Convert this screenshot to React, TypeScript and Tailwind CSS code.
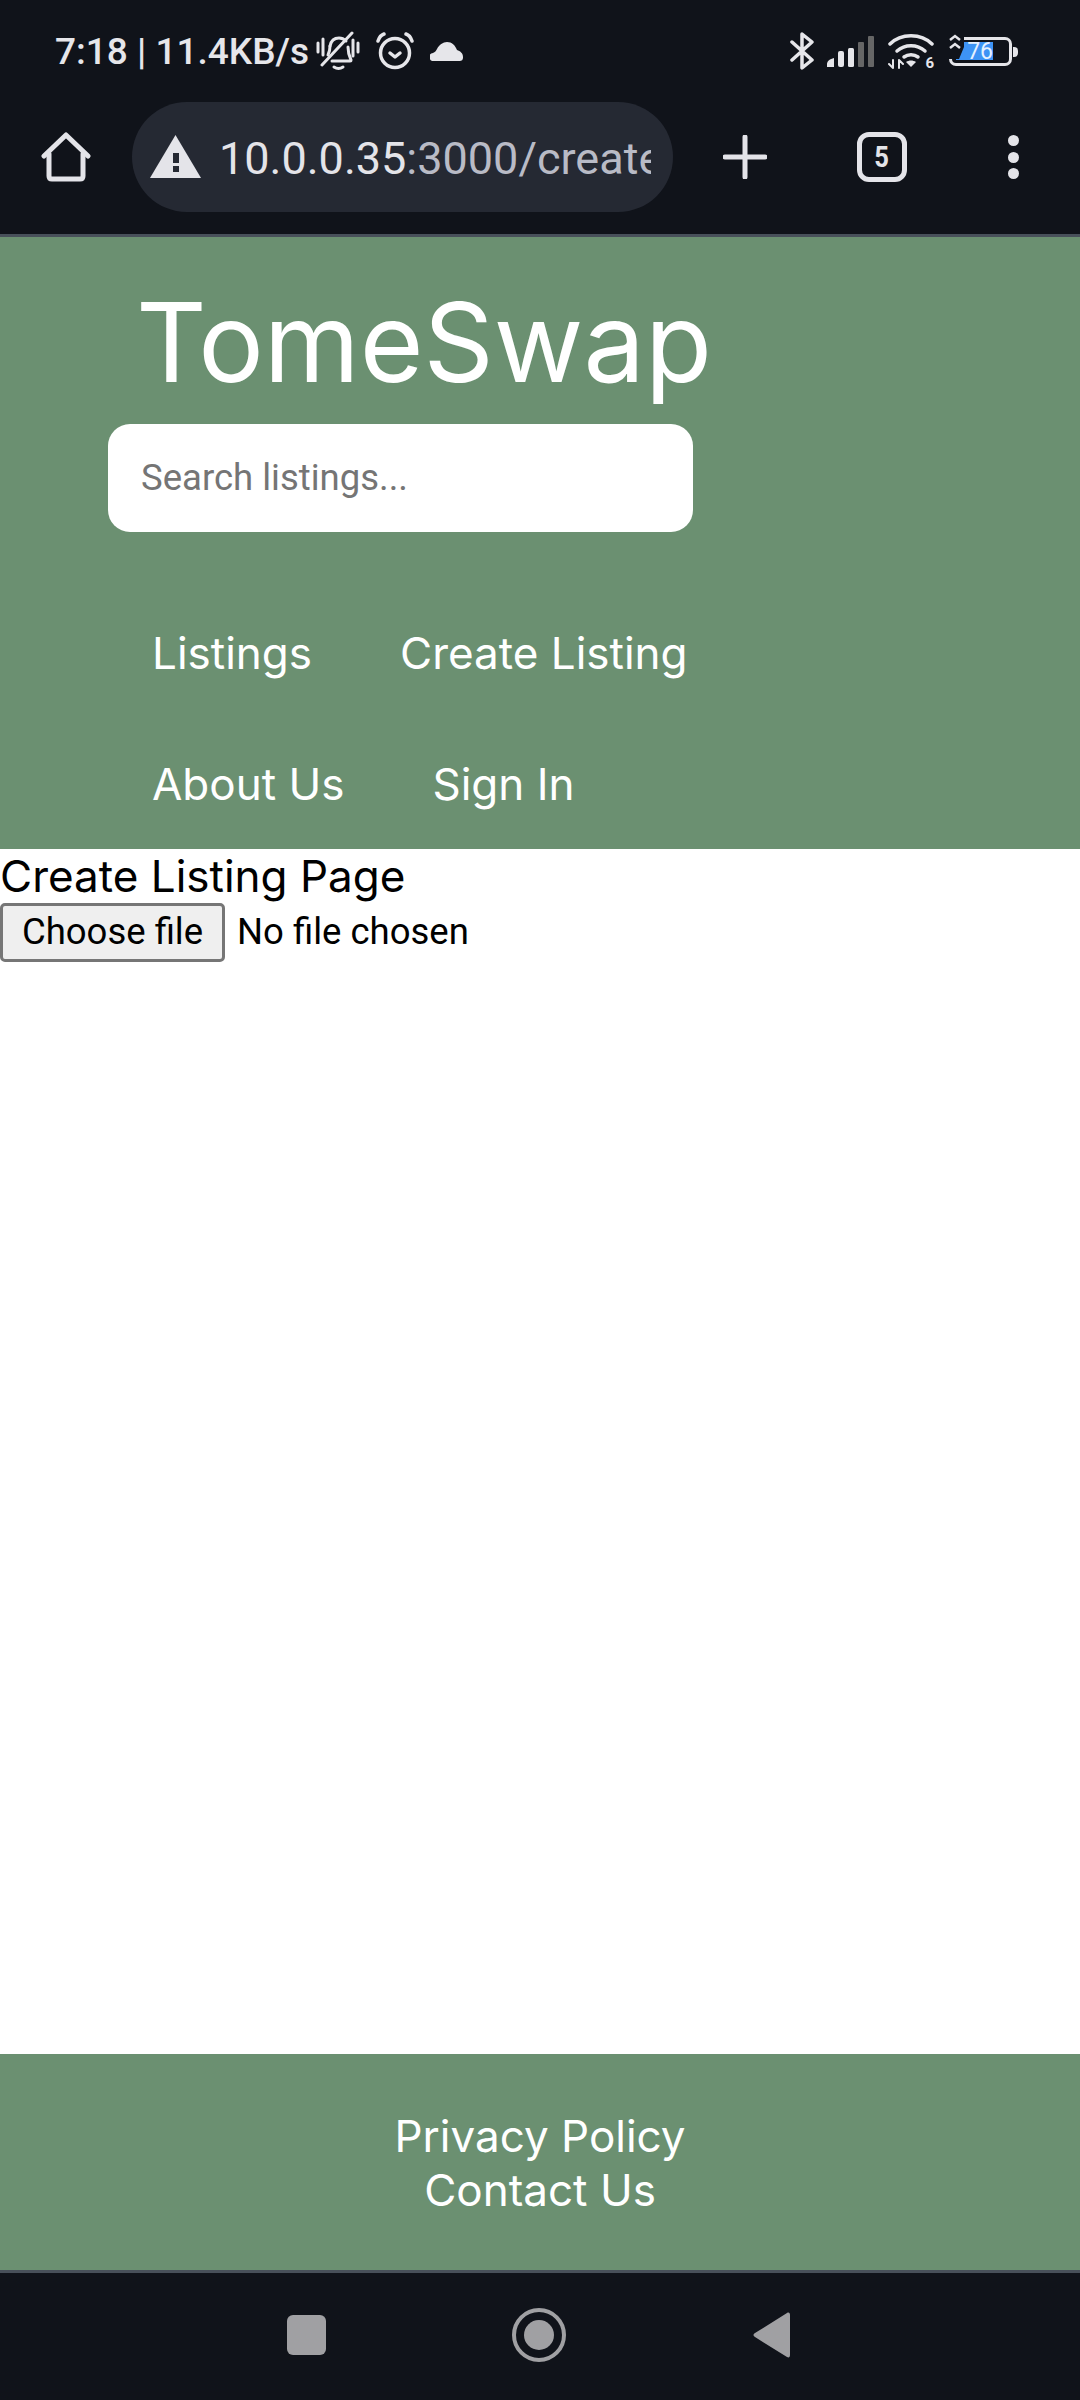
import React from 'react';

const NavLink: React.FC<{ label: string }> = ({ label }) => (
  <a className="block text-[44px] leading-[54px] text-white">{label}</a>
);

const StatusBar: React.FC = () => (
  <div className="flex h-[102px] items-center justify-between pl-[55px] pr-[68px] text-[#e6e6ea]">
    <div className="flex items-center">
      <span className="font-['Roboto',sans-serif] text-[37px] leading-none font-medium">7:18 | 11.4KB/s</span>
      {/* muted bell */}
      <svg className="ml-[7px]" width="44" height="40" viewBox="0 0 44 40" fill="none" stroke="currentColor" strokeWidth="3" strokeLinecap="round" strokeLinejoin="round">
        <path d="M14 15c1-5 4-8 9-8 3 0 5 1 7 3" />
        <path d="M32 16c0 5 1 9 3 13 0 1 0 1-1 1H16" />
        <path d="M12 24c1-2 2-5 2-9" />
        <path d="M18 36c3 2 6 2 9 0" />
        <path d="M6 34 36 2" />
        <path d="M2 12v9M7 8v16M37 9v16M42 12v9" />
      </svg>
      {/* alarm */}
      <svg className="ml-[16px]" width="38" height="38" viewBox="0 0 38 38" fill="none" stroke="currentColor" strokeWidth="3.5" strokeLinecap="round" strokeLinejoin="round">
        <circle cx="19" cy="21" r="14.5" />
        <path d="M14 21l5 4 5-4" />
        <path d="M2 9c1-3 3-6 6-7M36 9c-1-3-3-6-6-7" />
      </svg>
      <svg className="ml-[16px]" width="33" height="19" viewBox="0 0 33 19" fill="currentColor">
        <path d="M4 19a4 4 0 0 1-1-8c2-1 3-2 4-4 2-4 6-7 10-7 5 0 8 3 10 8 3 1 6 3 6 7 0 3-1 4-4 4Z" />
      </svg>
    </div>
    <div className="flex items-center">
      {/* bluetooth */}
      <svg width="24" height="38" viewBox="0 0 24 38" fill="none" stroke="currentColor" strokeWidth="3.5" strokeLinejoin="round" strokeLinecap="round">
        <path d="M2 10l20 18-10 8V2l10 8L2 28" />
      </svg>
      {/* signal */}
      <svg className="ml-[13px]" width="48" height="31" viewBox="0 0 48 31" fill="currentColor">
        <path d="M0 31v-3c0-3 3-5 7-6v9Z" />
        <rect x="11" y="15" width="6" height="16" rx="2" />
        <rect x="21" y="12" width="6" height="19" rx="1.5" />
        <rect x="31" y="6" width="6" height="25" rx="1" fill="#666" />
        <rect x="41" y="0" width="6" height="31" rx="1" fill="#666" />
      </svg>
      {/* wifi */}
      <div className="relative ml-[13px] h-[36px] w-[46px]">
        <svg width="46" height="36" viewBox="0 0 46 36" fill="none" stroke="currentColor" strokeWidth="3.5" strokeLinecap="round">
          <path d="M2 11C13 0 33 0 44 11" />
          <path d="M9 18c8-7 20-7 28 0" />
          <path d="M16 24c4-3 10-3 14 0" />
          <path d="M18 29c3-2 7-2 10 0l-5 5Z" fill="currentColor" stroke="none" />
          <path d="M5 35v-8M1 31l4 4M11 27v8M11 27l4 4" strokeWidth="2" />
        </svg>
        <span className="absolute -bottom-[2px] right-0 font-['Roboto',sans-serif] text-[15px] leading-none font-bold">6</span>
      </div>
      {/* battery */}
      <div className="relative ml-[15px] flex h-[29px] w-[63px] items-center rounded-[7px] border-[3px] border-[#e6e6ea] pl-[4px]">
        <div className="flex h-[18px] w-[37px] items-center justify-end bg-[#3d93f5] font-['Roboto',sans-serif] text-[23px] leading-none text-[#e6f1ff]">76</div>
        <div className="absolute -right-[9px] top-[7px] h-[10px] w-[5px] rounded-r-sm bg-[#e6e6ea]" />
        <svg className="absolute -left-[5px] -top-[7px]" width="17" height="26" viewBox="0 0 17 26" fill="none">
          <path d="M0 0h17v14l-5 12H0Z" fill="#10131a" />
          <path d="M3 7l5-4 5 4M3 15l5-4 5 4" stroke="#e6e6ea" strokeWidth="2.5" />
        </svg>
      </div>
    </div>
  </div>
);

const Toolbar: React.FC = () => (
  <div className="flex h-[132px] items-start pl-[41px] text-[#e4e4e9]">
    <svg className="mt-[30px]" width="50" height="50" viewBox="0 0 50 50" fill="none" stroke="currentColor" strokeWidth="5" strokeLinecap="round" strokeLinejoin="round">
      <path d="M3 24 25 3l22 21" />
      <path d="M8 22v22c0 2 1 3 3 3h28c2 0 3-1 3-3V22" />
    </svg>
    <div className="ml-[41px] flex h-[110px] w-[541px] items-center overflow-hidden rounded-[55px] bg-[#252933] pl-[18px] pr-[22px]">
      <svg className="mb-[2px] shrink-0" width="51" height="43" viewBox="0 0 51 43">
        <path d="M25.5 0 51 43H0Z" fill="#e4e4e9" />
        <rect x="23" y="18" width="6" height="10" fill="#252933" />
        <rect x="23" y="31" width="6" height="6" fill="#252933" />
      </svg>
      <span className="ml-[18px] overflow-hidden whitespace-nowrap pt-[3px] font-['Roboto',sans-serif] text-[45px] leading-none">
        <span className="text-[#e4e4e9]">10.0.0.35</span>
        <span className="text-[#b9bbc6]">:3000/create-listing</span>
      </span>
    </div>
    <svg className="ml-[50px] mt-[33px]" width="44" height="44" viewBox="0 0 44 44" fill="none" stroke="currentColor" strokeWidth="5" strokeLinecap="round">
      <path d="M22 2v40M2 22h40" />
    </svg>
    <div className="ml-[90px] mt-[30px] flex h-[50px] w-[50px] items-center justify-center rounded-[12px] border-[5px] border-[#e4e4e9] font-['Roboto',sans-serif] text-[30px] leading-none font-bold">
      <span className="scale-x-[0.85]">5</span>
    </div>
    <div className="ml-[101px] mt-[33px] flex flex-col gap-[5.5px]">
      <div className="h-[11px] w-[11px] rounded-full bg-[#e4e4e9]" />
      <div className="h-[11px] w-[11px] rounded-full bg-[#e4e4e9]" />
      <div className="h-[11px] w-[11px] rounded-full bg-[#e4e4e9]" />
    </div>
  </div>
);

const BottomNav: React.FC = () => (
  <div className="flex h-[127px] items-center bg-[#10131a] pb-[3px] pl-[287px] text-[#a0a0a3]">
    <div className="h-[40px] w-[39px] rounded-[6px] bg-[#a0a0a3]" />
    <svg className="ml-[186px]" width="54" height="54" viewBox="0 0 54 54">
      <circle cx="27" cy="27" r="25" fill="none" stroke="currentColor" strokeWidth="4" />
      <circle cx="27" cy="27" r="15" fill="currentColor" />
    </svg>
    <svg className="ml-[187px]" width="37" height="46" viewBox="0 0 37 46" fill="currentColor">
      <path d="M34 1c2-1 3 0 3 2v40c0 2-1 3-3 2L2 25c-2-1-2-3 0-4Z" />
    </svg>
  </div>
);

export default function App() {
  return (
    <div className="flex h-[2400px] w-[1080px] flex-col overflow-hidden bg-white font-['Inter',sans-serif]">
      <div className="bg-[#10131a]">
        <StatusBar />
        <Toolbar />
      </div>
      <div className="h-[3px] bg-[#48505a]" />

      {/* Header */}
      <header className="flex h-[612px] flex-col bg-[#6b9071] text-white">
        <h1 className="ml-[136px] mt-[39px] text-[109.5px] leading-[132px] font-normal">TomeSwap</h1>
        <input
          placeholder="Search listings..."
          className="ml-[108px] mt-[16px] h-[108px] w-[585px] rounded-[22px] bg-white px-[33px] pb-[2px] font-['Roboto',sans-serif] text-[36.5px] text-black outline-none placeholder:text-[#757575]"
        />
        <nav className="ml-[152px] mt-[94px] flex flex-col gap-[77px]">
          <div className="flex gap-[88px]">
            <NavLink label="Listings" />
            <NavLink label="Create Listing" />
          </div>
          <div className="flex gap-[88px]">
            <NavLink label="About Us" />
            <NavLink label="Sign In" />
          </div>
        </nav>
      </header>

      {/* Main */}
      <main className="flex-1 text-black">
        <div className="text-[44px] leading-[54px]">Create Listing Page</div>
        <div className="flex items-center font-['Roboto',sans-serif] text-[36.5px] leading-none">
          <button className="flex h-[59px] w-[225px] items-center justify-center rounded-[5px] border-[3px] border-[#767676] bg-[#efefef]">
            Choose file
          </button>
          <span className="ml-[12px]">No file chosen</span>
        </div>
      </main>

      {/* Footer */}
      <footer className="flex h-[216px] flex-col items-center bg-[#6b9071] pt-[55px] text-[44px] leading-[54px] text-white">
        <a>Privacy Policy</a>
        <a>Contact Us</a>
      </footer>
      <div className="h-[3px] bg-[#48505a]" />
      <BottomNav />
    </div>
  );
}
